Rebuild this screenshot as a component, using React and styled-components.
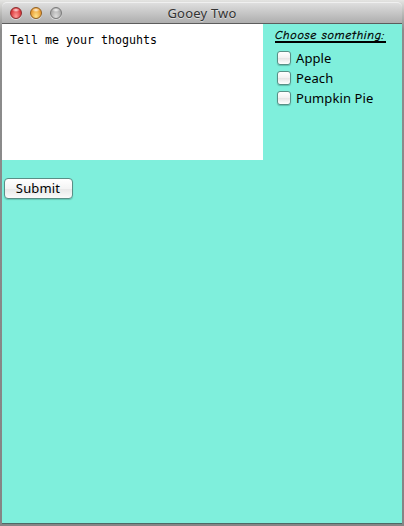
import React from 'react';
import styled, { createGlobalStyle } from 'styled-components';

const Global = createGlobalStyle`
  * { box-sizing: border-box; }
  body { margin: 0; background: #dededc; overflow: hidden; }
`;

const Window = styled.main`
  display: flex;
  flex-direction: column;
  width: 404px;
  height: 526px;
  padding: 2px 2px 2px;
  background: linear-gradient(#e4e4e2 0, #bdbdbb 12px, #8c8c8c 30px, #858585 100%);
  font-family: "Noto Sans", sans-serif;
  color: #000;
`;

const TitleBar = styled.header`
  display: grid;
  grid-template-columns: 80px 1fr 80px;
  align-items: center;
  flex: 0 0 22px;
  border-top: 1px solid #f0f0f0;
  border-bottom: 1px solid #5c5c5c;
  border-radius: 5px 5px 0 0;
  background: linear-gradient(#dedede, #aeaeae);
`;

const Lights = styled.div`
  display: flex;
  gap: 8px;
  padding-left: 8px;
`;

const Light = styled.span`
  width: 12px;
  height: 12px;
  border: 1px solid ${(p) => p.$edge};
  border-radius: 50%;
  background:
    radial-gradient(ellipse 4px 2px at 50% 20%, rgba(255,255,255,.85), transparent),
    radial-gradient(ellipse at 50% 85%, ${(p) => p.$glow}, ${(p) => p.$tone} 75%);
  box-shadow: 0 1px 0 rgba(255,255,255,.5);
`;

const Title = styled.h1`
  margin: 0;
  text-align: center;
  font-size: 13px;
  font-weight: 400;
  line-height: 18px;
  letter-spacing: 0.2px;
  color: #333;
  text-shadow: 0 1px 0 rgba(255,255,255,.5);
`;

const Content = styled.section`
  flex: 1;
  background: #7fefdc;
  border-bottom: 1px solid #4d6966;
`;

const Top = styled.div`
  display: flex;
  height: 136px;
`;

const Thoughts = styled.textarea`
  width: 261px;
  height: 136px;
  padding: 9px 8px;
  border: 0;
  outline: 0;
  resize: none;
  background: #fff;
  color: #000;
  font: 11.63px/15px "DejaVu Sans Mono", monospace;
`;

const Choices = styled.fieldset`
  flex: 1;
  margin: 0;
  padding: 4px 0 0 12px;
  border: 0;
`;

const Heading = styled.div`
  width: 111px;
  height: 15px;
  margin-bottom: 5px;
  border-bottom: 2px solid #000;
  font: italic 12px/15px "Comic Sans MS", "Comic Neue", "Noto Sans", sans-serif;
  letter-spacing: 0.75px;
  -webkit-text-stroke: 0.3px #000;
  white-space: nowrap;
`;

const Choice = styled.label`
  display: flex;
  align-items: center;
  gap: 5px;
  height: 20px;
  padding-left: 2px;
  font-size: 13px;
  line-height: 20px;
  letter-spacing: 0.1px;
  white-space: nowrap;
`;

const Check = styled.input`
  appearance: none;
  width: 14px;
  height: 14px;
  margin: 0;
  border: 1px solid #598f86;
  border-radius: 3px;
  background: linear-gradient(#fff, #f1f1f1 50%, #e5e5e5 52%, #fff);
  box-shadow: 0 1px 1px rgba(40,100,90,.35);
`;

const Submit = styled.button`
  display: block;
  width: 69px;
  height: 21px;
  margin: 18px 0 0 2px;
  padding: 0 1px 1px 0;
  border: 1px solid #5a8e86;
  border-radius: 4px;
  background: linear-gradient(#fff, #f4f4f4 50%, #e8e8e8 52%, #fafafa);
  box-shadow: 0 1px 1px rgba(40,100,90,.3);
  font: 13px/18px "Noto Sans", sans-serif;
  letter-spacing: 0.15px;
  color: #000;
`;

export default function App() {
  return (
    <Window>
      <Global />
      <TitleBar>
        <Lights>
          <Light $edge="#8d2c2d" $tone="#d93438" $glow="#ff9d99" />
          <Light $edge="#916020" $tone="#e89931" $glow="#ffe58b" />
          <Light $edge="#7b7b7b" $tone="#aaaaaa" $glow="#dddddd" />
        </Lights>
        <Title>Gooey Two</Title>
      </TitleBar>
      <Content>
        <Top>
          <Thoughts defaultValue="Tell me your thoguhts" spellCheck={false} />
          <Choices>
            <Heading>Choose something:</Heading>
            {['Apple', 'Peach', 'Pumpkin Pie'].map((name) => (
              <Choice key={name}><Check type="checkbox" />{name}</Choice>
            ))}
          </Choices>
        </Top>
        <Submit>Submit</Submit>
      </Content>
    </Window>
  );
}
